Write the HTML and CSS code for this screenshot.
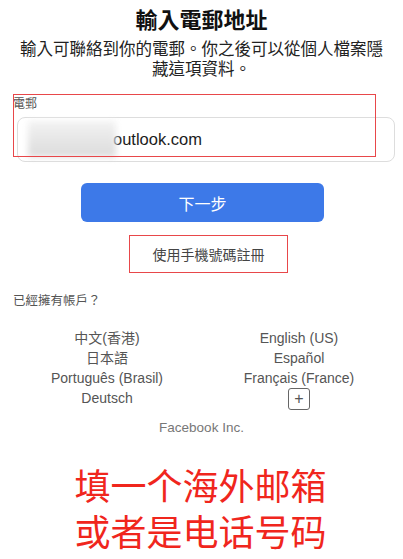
FILE: index.html
```html
<!DOCTYPE html>
<html lang="zh-Hant">
<head>
    <meta charset="UTF-8">
    <meta name="viewport" content="width=device-width, initial-scale=1.0">
    <title>輸入電郵地址</title>
    <link rel="stylesheet" href="styles.css">
</head>
<body>
    <div class="page">
        <h1 class="title">輸入電郵地址</h1>
        <p class="subtitle">輸入可聯絡到你的電郵。你之後可以從個人檔案隱</p>
        <p class="subtitle">藏這項資料。</p>

        <div class="emailField">
            <label class="fieldLabel" for="email">電郵</label>
            <div class="inputBox">
                <span class="blurPatch"></span>
                <span class="inputText" id="email">outlook.com</span>
            </div>
            <div class="markBox emailMark"></div>
        </div>

        <div class="actions">
            <button type="button" class="nextButton">下一步</button>
            <a class="phoneLink" href="#">使用手機號碼註冊</a>
        </div>

        <p class="haveAccount">已經擁有帳戶？</p>

        <div class="languages">
            <span>中文(香港)</span>
            <span>English (US)</span>
            <span>日本語</span>
            <span>Español</span>
            <span>Português (Brasil)</span>
            <span>Français (France)</span>
            <span>Deutsch</span>
            <span><span class="moreLang">+</span></span>
        </div>

        <p class="company">Facebook Inc.</p>

        <p class="note">填一个海外邮箱</p>
        <p class="note">或者是电话号码</p>
    </div>
</body>
</html>
```

FILE: styles.css
```css
body {
    margin: 0;
    background-color: #ffffff;
    font-family: "Liberation Sans", "Noto Sans CJK TC", sans-serif;
    color: #333333;
}

.page {
    width: 403px;
    height: 559px;
    overflow: hidden;
}

.title {
    margin: 3px 0 0;
    font-family: "Noto Sans CJK TC", sans-serif;
    font-size: 22px;
    font-weight: 700;
    line-height: 30px;
    text-align: center;
    color: #111111;
}

.subtitle {
    margin: 0;
    height: 20px;
    font-family: "Noto Sans CJK TC", sans-serif;
    font-size: 16.5px;
    line-height: 20px;
    text-align: center;
    color: #222222;
}

.title + .subtitle {
    margin-top: 5px;
}

.emailField {
    position: relative;
    margin: 18px 8px 0 17px;
}

.fieldLabel {
    display: block;
    margin-left: -4px;
    font-family: "Noto Sans CJK TC", sans-serif;
    font-size: 12px;
    line-height: 14px;
    color: #555555;
}

.inputBox {
    position: relative;
    margin-top: 7px;
    height: 43px;
    border: 1px solid #dddddd;
    border-radius: 8px;
    display: flex;
    align-items: center;
}

.inputText {
    margin-left: 95px;
    font-size: 16.5px;
    color: #1c1c1c;
}

.blurPatch {
    position: absolute;
    left: 10px;
    top: 3px;
    width: 88px;
    height: 36px;
    background: linear-gradient(180deg, #f3f3f3 0%, #e8e8e8 45%, #dcdcdc 100%);
    filter: blur(3px);
}

.markBox {
    position: absolute;
    border: 1.5px solid #e8474a;
}

.emailMark {
    left: -4px;
    top: -2px;
    width: 361px;
    height: 61px;
}

.actions {
    display: flex;
    flex-direction: column;
    align-items: center;
    margin-top: 21px;
}

.nextButton {
    margin-left: 2px;
    width: 243px;
    height: 39px;
    border: none;
    border-radius: 6px;
    background-color: #3d79e8;
    color: #ffffff;
    font-family: "Noto Sans CJK TC", sans-serif;
    font-size: 16px;
}

.phoneLink {
    margin-top: 13px;
    margin-left: 14px;
    width: 157px;
    height: 36px;
    border: 1.5px solid #e8474a;
    display: flex;
    align-items: center;
    justify-content: center;
    font-family: "Noto Sans CJK TC", sans-serif;
    font-size: 14px;
    color: #444444;
    text-decoration: none;
}

.haveAccount {
    margin: 19px 0 0 13px;
    font-family: "Noto Sans CJK TC", sans-serif;
    font-size: 12.5px;
    line-height: 16px;
    color: #555555;
}

.languages {
    display: grid;
    grid-template-columns: 214px 170px;
    margin-top: 20px;
    font-family: "Liberation Sans", "Noto Sans CJK TC", sans-serif;
    font-size: 14px;
    line-height: 20px;
    color: #555555;
    text-align: center;
}

.moreLang {
    display: inline-block;
    width: 22px;
    height: 22px;
    box-sizing: border-box;
    border: 1.5px solid #666666;
    border-radius: 3px;
    font-size: 16px;
    line-height: 19px;
    color: #555555;
    vertical-align: top;
    margin-top: 0;
}

.company {
    margin: 10px 0 0;
    font-size: 13.5px;
    line-height: 16px;
    text-align: center;
    color: #777777;
}

.note {
    margin: 0 0 0 -2px;
    height: 46px;
    font-family: "Noto Sans CJK SC", sans-serif;
    font-size: 36px;
    line-height: 46px;
    text-align: center;
    color: #f0261d;
}

.company + .note {
    margin-top: 25px;
}
```
